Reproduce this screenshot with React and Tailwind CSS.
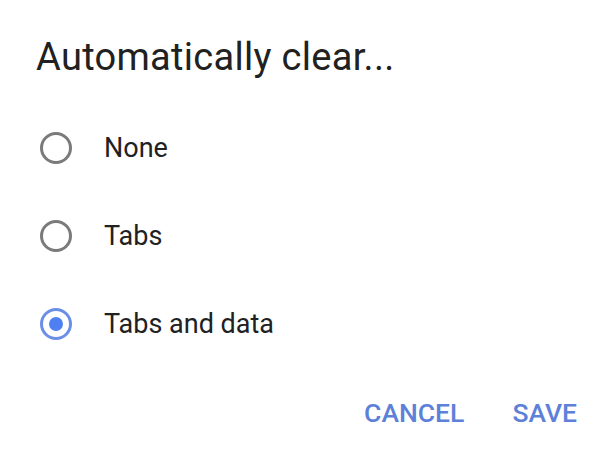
import { useState } from "react";

const options = ["None", "Tabs", "Tabs and data"];

const Radio = ({ checked }) => (
    <span className={`flex h-[32px] w-[32px] shrink-0 items-center justify-center rounded-full border-[3px] ${checked ? "border-[#6b8ee6]" : "border-[#7a7a7a]"}`}>
        {checked && <span className="block h-[14px] w-[14px] rounded-full bg-[#4f80f2]" />}
    </span>
);

export default function App() {
    const [selected, setSelected] = useState(2);

    return (
        <div className="h-[464px] w-[614px] bg-white font-['Roboto',sans-serif] text-[#212121]">
            {/* Title */}
            <h1 className="pl-[36px] pt-[35px] text-[38px] leading-[44px] tracking-[0.3px]">Automatically clear...</h1>

            {/* Options */}
            <div className="mt-[53px] flex flex-col gap-[56px] pl-[40px]">
                {options.map((opt, i) => (
                    <button key={opt} onClick={() => setSelected(i)} className="flex h-[32px] items-center gap-[32px] text-left">
                        <Radio checked={selected === i} />
                        <span className="text-[27px] leading-[32px]">{opt}</span>
                    </button>
                ))}
            </div>

            {/* Actions */}
            <div className="mt-[57px] flex justify-end gap-[48px] pr-[37px] text-[26.5px] font-medium leading-[32px] text-[#5d80d9]">
                <button>CANCEL</button>
                <button>SAVE</button>
            </div>
        </div>
    );
}
